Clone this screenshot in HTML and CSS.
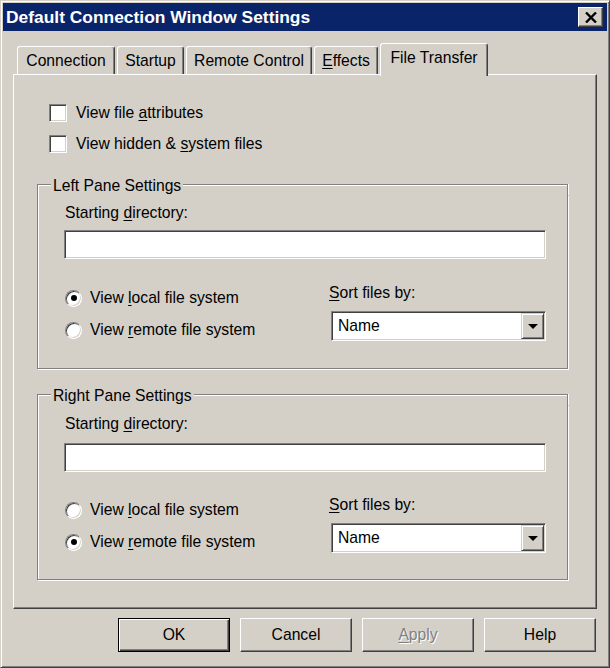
FILE: index.html
```html
<!DOCTYPE html>
<html lang="en">
<head>
<meta charset="utf-8">
<title>Default Connection Window Settings</title>
<link rel="stylesheet" href="styles.css">
</head>
<body>
<div class="window">
  <div class="titlebar">
    <span class="title">Default Connection Window Settings</span>
    <button class="close" type="button" aria-label="Close">
      <svg width="12" height="11" viewBox="0 0 12 11"><path d="M1 0.5 L11 10.5 M11 0.5 L1 10.5" stroke="#000" stroke-width="2.4" fill="none"/></svg>
    </button>
  </div>
  <div class="content">
    <div class="tabs">
      <div class="tab tab-connection">Connection</div>
      <div class="tab tab-startup">Startup</div>
      <div class="tab tab-remote">Remote Control</div>
      <div class="tab tab-effects"><u>E</u>ffects</div>
      <div class="tab tab-transfer active">File Transfer</div>
    </div>
    <div class="panel">
      <div class="check-row"><span class="checkbox"></span><span>View file <u>a</u>ttributes</span></div>
      <div class="check-row"><span class="checkbox"></span><span>View hidden &amp; <u>s</u>ystem files</span></div>

      <section class="group">
        <div class="group-head"><span class="group-title">Left Pane Settings</span></div>
        <div class="group-body">
          <div class="field-label">Starting <u>d</u>irectory:</div>
          <div class="textbox"></div>
          <div class="options">
            <div class="radios">
              <div class="radio-row"><span class="radio checked"></span><span>View <u>l</u>ocal file system</span></div>
              <div class="radio-row"><span class="radio"></span><span>View <u>r</u>emote file system</span></div>
            </div>
            <div class="sort">
              <div class="sort-label"><u>S</u>ort files by:</div>
              <div class="combo"><span class="combo-value">Name</span><span class="combo-btn"><span class="arrow"></span></span></div>
            </div>
          </div>
        </div>
      </section>

      <section class="group group-right">
        <div class="group-head"><span class="group-title">Right Pane Settings</span></div>
        <div class="group-body">
          <div class="field-label">Starting <u>d</u>irectory:</div>
          <div class="textbox"></div>
          <div class="options">
            <div class="radios">
              <div class="radio-row"><span class="radio"></span><span>View <u>l</u>ocal file system</span></div>
              <div class="radio-row"><span class="radio checked"></span><span>View <u>r</u>emote file system</span></div>
            </div>
            <div class="sort">
              <div class="sort-label"><u>S</u>ort files by:</div>
              <div class="combo"><span class="combo-value">Name</span><span class="combo-btn"><span class="arrow"></span></span></div>
            </div>
          </div>
        </div>
      </section>
    </div>
    <div class="buttons">
      <button class="btn default" type="button">OK</button>
      <button class="btn" type="button">Cancel</button>
      <button class="btn disabled" type="button"><u>A</u>pply</button>
      <button class="btn" type="button">Help</button>
    </div>
  </div>
</div>
</body>
</html>
```
FILE: styles.css
```css
* { box-sizing: border-box; }

html, body {
  margin: 0;
  padding: 0;
  background: #d4d0c8;
}

body {
  font-family: "Liberation Sans", Arial, sans-serif;
  font-size: 15.7px;
  line-height: 18px;
  color: #000;
}

u { text-decoration: underline; text-underline-offset: 2px; }

/* Window frame */
.window {
  width: 610px;
  height: 668px;
  background: #d4d0c8;
  border-top: 1px solid #d4d0c8;
  border-left: 1px solid #d4d0c8;
  border-right: 1px solid #404040;
  border-bottom: 1px solid #404040;
  box-shadow: inset 1px 1px 0 #fff, inset -1px -1px 0 #808080;
  padding: 2px;
}

.titlebar {
  height: 28px;
  background: #0a246a;
  display: flex;
  align-items: center;
  justify-content: space-between;
  padding: 0 4px 0 3px;
}

.title {
  color: #fff;
  font-weight: bold;
  font-size: 17.4px;
}

.close {
  width: 25px;
  height: 20px;
  padding: 0;
  margin: 0;
  display: flex;
  align-items: center;
  justify-content: center;
  background: #d4d0c8;
  border-top: 1px solid #fff;
  border-left: 1px solid #fff;
  border-right: 1px solid #404040;
  border-bottom: 1px solid #404040;
  box-shadow: inset -1px -1px 0 #808080;
}

.content {
  padding: 12px 10px 0 10px;
}

/* Tabs */
.tabs {
  display: flex;
  align-items: flex-end;
  gap: 2px;
  margin-left: 4px;
  height: 31px;
}

.tab {
  height: 28px;
  padding-top: 5px;
  text-align: center;
  white-space: nowrap;
  border-top: 1px solid #fff;
  border-left: 1px solid #fff;
  border-right: 1px solid #404040;
  border-radius: 3px 3px 0 0;
  box-shadow: inset -1px 0 0 #808080;
  background: #d4d0c8;
}

.tab-connection { width: 98px; }
.tab-startup { width: 67px; }
.tab-remote { width: 126px; }
.tab-effects { width: 64px; }
.tab-transfer { width: 108px; }

.tab.active {
  position: relative;
  z-index: 1;
  height: 33px;
  margin-bottom: -2px;
}

.panel {
  border-top: 1px solid #fff;
  border-left: 1px solid #fff;
  border-right: 1px solid #404040;
  border-bottom: 1px solid #404040;
  box-shadow: inset -1px -1px 0 #808080;
  padding: 22px 28px 28px 23px;
}

/* Checkboxes */
.check-row {
  height: 31px;
  display: flex;
  align-items: center;
  gap: 9px;
  margin-left: 12px;
}

.checkbox {
  width: 18px;
  height: 18px;
  background: #fff;
  border-top: 1px solid #808080;
  border-left: 1px solid #808080;
  border-right: 1px solid #fff;
  border-bottom: 1px solid #fff;
  box-shadow: inset 1px 1px 0 #404040, inset -1px -1px 0 #d4d0c8;
}

/* Etched group boxes */
.group { margin-top: 17px; }

.group-head {
  height: 19px;
  display: flex;
  align-items: flex-end;
}

.group-head::before,
.group-head::after {
  content: "";
  height: 10px;
  border-top: 1px solid #808080;
}

.group-head::before {
  width: 13px;
  border-left: 1px solid #808080;
  box-shadow: inset 1px 1px 0 #fff;
}

.group-head::after {
  flex: 1;
  border-right: 1px solid #808080;
  box-shadow: inset 0 1px 0 #fff, 1px 0 0 #fff;
}

.group-title {
  align-self: center;
  padding: 0 2px;
  white-space: nowrap;
}

.group-body {
  border-left: 1px solid #808080;
  border-right: 1px solid #808080;
  border-bottom: 1px solid #808080;
  box-shadow: inset 1px 0 0 #fff, 1px 1px 0 #fff;
  padding: 9px 21px 22px 26px;
}

.group-right .group-body { padding-top: 10px; padding-bottom: 21px; }
.group-right .textbox { margin-top: 10px; }
.group-right .options { margin-top: 22px; }

.field-label { padding-left: 1px; }

.textbox {
  height: 29px;
  margin-top: 8px;
  background: #fff;
  border-top: 1px solid #808080;
  border-left: 1px solid #808080;
  border-right: 1px solid #fff;
  border-bottom: 1px solid #fff;
  box-shadow: inset 1px 1px 0 #404040, inset -1px -1px 0 #d4d0c8;
}

.options {
  display: flex;
  margin-top: 23px;
}

.radios { flex: 1; }

.radio-row {
  height: 32px;
  display: flex;
  align-items: center;
  gap: 8px;
  padding-left: 1px;
}

.radio {
  width: 17px;
  height: 17px;
  border-radius: 50%;
  background: #fff;
  border: 1px solid;
  border-color: #808080 #fff #fff #808080;
  box-shadow: inset 1px 1px 0 #404040, inset -1px -1px 0 #d4d0c8;
  display: flex;
  align-items: center;
  justify-content: center;
}

.radio.checked::after {
  content: "";
  width: 6px;
  height: 6px;
  border-radius: 50%;
  background: #000;
}

.sort { width: 215px; }

.sort-label {
  margin-top: 2px;
  margin-left: -2px;
}

.combo {
  height: 30px;
  margin-top: 9px;
  background: #fff;
  border-top: 1px solid #808080;
  border-left: 1px solid #808080;
  border-right: 1px solid #fff;
  border-bottom: 1px solid #fff;
  box-shadow: inset 1px 1px 0 #404040, inset -1px -1px 0 #d4d0c8;
  display: flex;
  align-items: center;
  padding: 2px 1px 2px 2px;
}

.combo-value {
  flex: 1;
  padding-left: 4px;
}

.combo-btn {
  width: 23px;
  height: 26px;
  background: #d4d0c8;
  border-top: 1px solid #d4d0c8;
  border-left: 1px solid #d4d0c8;
  border-right: 1px solid #404040;
  border-bottom: 1px solid #404040;
  box-shadow: inset 1px 1px 0 #fff, inset -1px -1px 0 #808080;
  display: flex;
  align-items: center;
  justify-content: center;
}

.arrow {
  width: 0;
  height: 0;
  border-left: 5px solid transparent;
  border-right: 5px solid transparent;
  border-top: 5px solid #000;
}

/* Dialog buttons */
.buttons {
  display: flex;
  justify-content: flex-end;
  gap: 10px;
  margin-top: 9px;
  padding-right: 1px;
}

.btn {
  width: 112px;
  height: 34px;
  padding: 0;
  font-family: "Liberation Sans", Arial, sans-serif;
  font-size: 15.7px;
  color: #000;
  background: #d4d0c8;
  border-top: 1px solid #fff;
  border-left: 1px solid #fff;
  border-right: 1px solid #404040;
  border-bottom: 1px solid #404040;
  box-shadow: inset -1px -1px 0 #808080;
}

.btn.default {
  border: 1px solid #000;
  box-shadow: inset 1px 1px 0 #fff, inset -1px -1px 0 #404040, inset -2px -2px 0 #808080;
}

.btn.disabled {
  color: #808080;
  text-shadow: 1px 1px 0 #fff;
}
```
